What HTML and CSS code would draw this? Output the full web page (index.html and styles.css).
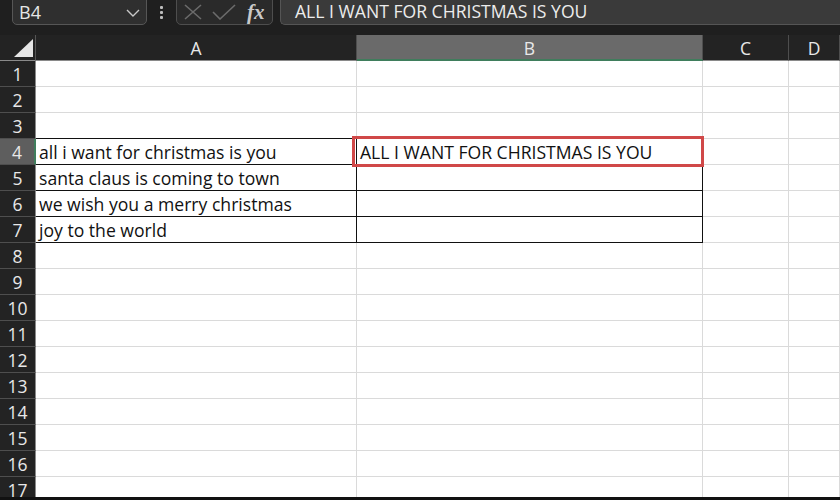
FILE: index.html
```html
<!DOCTYPE html>
<html>
<head>
<meta charset="utf-8">
<link rel="stylesheet" href="styles.css">
</head>
<body>
<div class="app">
  <div class="toolbar">
    <div class="namebox">
      <span class="name">B4</span>
      <svg class="chev" width="14" height="8" viewBox="0 0 14 8"><polyline points="1,1 7,7 13,1" fill="none" stroke="#c8c8c8" stroke-width="1.4"/></svg>
    </div>
    <div class="dots"><i></i><i></i><i></i></div>
    <div class="fxbox">
      <svg width="18" height="16" viewBox="0 0 18 16"><path d="M1 1 L17 15 M17 1 L1 15" stroke="#6b6b6b" stroke-width="1.6" fill="none"/></svg>
      <svg width="24" height="16" viewBox="0 0 24 16"><polyline points="1,8 8,15 23,1" stroke="#6b6b6b" stroke-width="1.6" fill="none"/></svg>
      <span class="fx">fx</span>
    </div>
    <div class="formula">ALL I WANT FOR CHRISTMAS IS YOU</div>
  </div>
  <div class="sheet">
    <div class="corner"><svg width="22" height="20" viewBox="0 0 22 20"><polygon points="21,1 21,19 2,19" fill="#e6e6e6"/></svg></div>
    <div class="ch">A</div>
    <div class="ch sel">B</div>
    <div class="ch">C</div>
    <div class="ch">D</div>

    <div class="rh">1</div><div class="c"></div><div class="c"></div><div class="c"></div><div class="c"></div>
    <div class="rh">2</div><div class="c"></div><div class="c"></div><div class="c"></div><div class="c"></div>
    <div class="rh">3</div><div class="c tb"></div><div class="c tb"></div><div class="c"></div><div class="c"></div>
    <div class="rh rsel">4</div><div class="c tb tr">all i want for christmas is you</div><div class="c tb tr active">ALL I WANT FOR CHRISTMAS IS YOU</div><div class="c"></div><div class="c"></div>
    <div class="rh">5</div><div class="c tb tr">santa claus is coming to town</div><div class="c tb tr"></div><div class="c"></div><div class="c"></div>
    <div class="rh">6</div><div class="c tb tr">we wish you a merry christmas</div><div class="c tb tr"></div><div class="c"></div><div class="c"></div>
    <div class="rh">7</div><div class="c tb tr">joy to the world</div><div class="c tb tr"></div><div class="c"></div><div class="c"></div>
    <div class="rh">8</div><div class="c"></div><div class="c"></div><div class="c"></div><div class="c"></div>
    <div class="rh">9</div><div class="c"></div><div class="c"></div><div class="c"></div><div class="c"></div>
    <div class="rh">10</div><div class="c"></div><div class="c"></div><div class="c"></div><div class="c"></div>
    <div class="rh">11</div><div class="c"></div><div class="c"></div><div class="c"></div><div class="c"></div>
    <div class="rh">12</div><div class="c"></div><div class="c"></div><div class="c"></div><div class="c"></div>
    <div class="rh">13</div><div class="c"></div><div class="c"></div><div class="c"></div><div class="c"></div>
    <div class="rh">14</div><div class="c"></div><div class="c"></div><div class="c"></div><div class="c"></div>
    <div class="rh">15</div><div class="c"></div><div class="c"></div><div class="c"></div><div class="c"></div>
    <div class="rh">16</div><div class="c"></div><div class="c"></div><div class="c"></div><div class="c"></div>
    <div class="rh">17</div><div class="c"></div><div class="c"></div><div class="c"></div><div class="c"></div>
  </div>
</div>
</body>
</html>
```

FILE: styles.css
```css
* { box-sizing: border-box; }
html, body { margin: 0; padding: 0; }
body {
  width: 840px;
  height: 500px;
  overflow: hidden;
  background: #1f1f1f;
  font-family: "Open Sans", "Noto Sans", sans-serif;
}
.app { display: flex; flex-direction: column; height: 500px; border-bottom: 3px solid #111; }
.toolbar {
  height: 35px;
  display: flex;
  align-items: flex-start;
  flex: none;
}
.namebox {
  margin-left: 12px;
  margin-top: -6px;
  width: 135px;
  height: 31px;
  background: #2f2f2f;
  border: 1px solid #565656;
  border-radius: 5px;
  display: flex;
  align-items: center;
  justify-content: space-between;
  padding: 5px 6px 0 6px;
  color: #e6e6e6;
  font-size: 18px;
}
.name { line-height: 22px; }
.chev { margin-top: 2px; }
.dots {
  width: 29px;
  display: flex;
  flex-direction: column;
  align-items: center;
  gap: 2px;
  padding-top: 6px;
}
.dots i { display: block; width: 3px; height: 3px; background: #bdbdbd; border-radius: 1px; }
.fxbox {
  margin-top: -6px;
  width: 97px;
  height: 31px;
  background: #2a2a2a;
  border: 1px solid #4e4e4e;
  border-radius: 5px;
  display: flex;
  align-items: center;
  gap: 10px;
  padding: 5px 0 0 7px;
}
.fx {
  font-family: "Liberation Serif", "DejaVu Serif", serif;
  font-style: italic;
  font-weight: bold;
  color: #c9c9c9;
  font-size: 21px;
  margin-left: 1px;
}
.formula {
  margin-left: 7px;
  margin-top: -6px;
  flex: 1;
  height: 31px;
  background: #3a3a3a;
  border: 1px solid #555;
  border-right: none;
  border-radius: 5px 0 0 5px;
  color: #ececec;
  font-size: 17.6px;
  padding: 4px 0 0 14px;
  line-height: 25px;
  white-space: nowrap;
}
.sheet {
  flex: 1;
  display: grid;
  grid-template-columns: 36px 321px 346px 86px 1fr;
  grid-auto-rows: 26px;
  overflow: hidden;
  background: #fff;
}
.corner {
  background: #232323;
  border-right: 1px solid #555;
  border-bottom: 1px solid #8a8a8a;
  display: flex;
  align-items: flex-end;
  justify-content: flex-end;
  padding: 0 1px 2px 0;
}
.ch {
  background: #232323;
  color: #e8e8e8;
  font-size: 17.5px;
  text-align: center;
  line-height: 27px;
  border-right: 1px solid #4e4e4e;
  border-bottom: 1px solid #8a8a8a;
}
.ch.sel {
  background: #6a6a6a;
  border-bottom: 2px solid #3f7d5c;
  line-height: 26px;
}
.rh {
  background: #232323;
  color: #e8e8e8;
  font-size: 17.5px;
  text-align: center;
  line-height: 26px;
  border-right: 1px solid #8a8a8a;
  border-bottom: 1px solid #4e4e4e;
}
.rh.rsel {
  background: #5e5e5e;
  border-right: 2px solid #3f7d5c;
}
.c {
  background: #fff;
  border-right: 1px solid #dadada;
  border-bottom: 1px solid #dadada;
  color: #111;
  font-size: 17.6px;
  line-height: 27px;
  padding-left: 3px;
  white-space: nowrap;
}
.c.tb { border-bottom-color: #111; }
.c.tr { border-right-color: #111; }
.c.active { position: relative; }
.c.active::after {
  content: "";
  position: absolute;
  left: -5px;
  right: -2px;
  top: -3px;
  bottom: -3px;
  border: 3px solid #d04848;
}
```
